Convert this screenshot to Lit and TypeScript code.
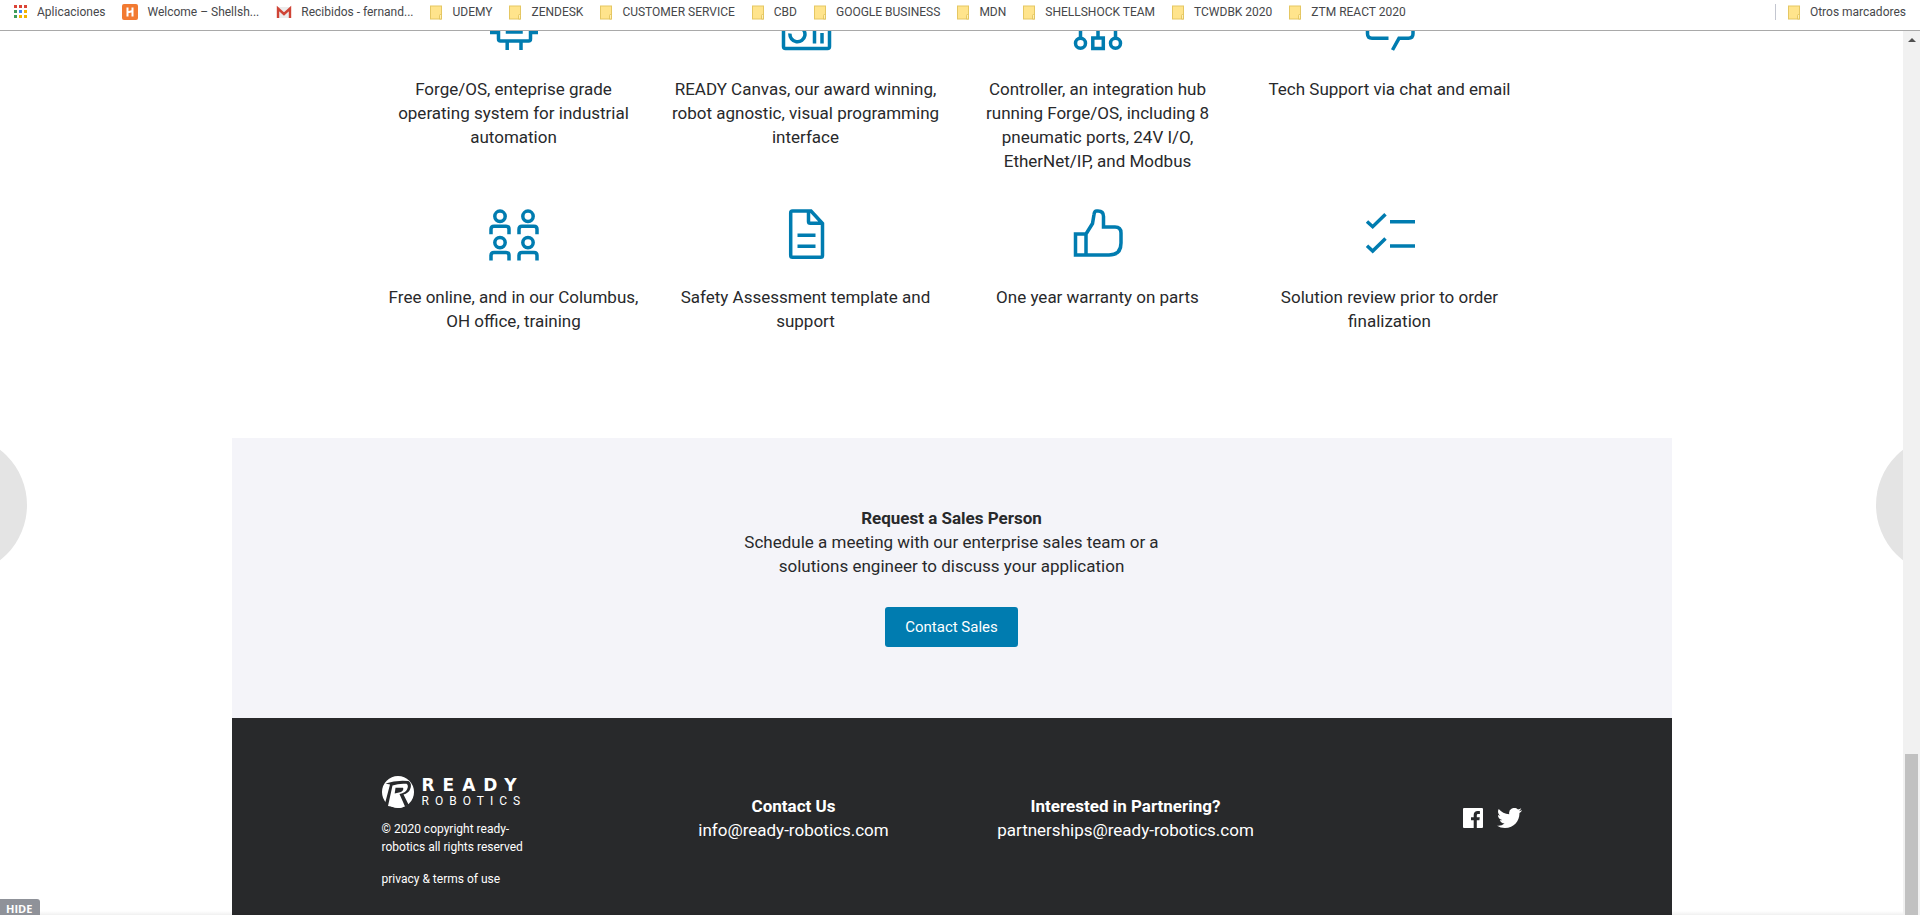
import { LitElement, html, svg, css } from "lit";
import { customElement } from "lit/decorators.js";

const folder = html`<svg class="folder" viewBox="0 0 12 15" aria-hidden="true">
  <rect x="0.5" y="1" width="11" height="13" fill="#ffe48c" stroke="#e5c763" />
  <path d="M9.5 14V10.500q0-1 1-1t1 1V14z" fill="#fff0b5" stroke="#e0bf55" stroke-width="0.8" />
</svg>`;

const appsIcon = html`<svg class="apps" viewBox="0 0 14 14" aria-hidden="true">
  ${["#db4437", "#db4437", "#db4437", "#3f9d5a", "#4285f4", "#f4b400", "#3f9d5a", "#f4b400", "#f4b400"].map(
    (c, i) => svg`<rect x=${(i % 3) * 5} y=${Math.floor(i / 3) * 5} width="3" height="3" fill=${c} />`
  )}
</svg>`;

const shellIcon = html`<svg class="fav" viewBox="0 0 16 16" aria-hidden="true">
  <rect width="16" height="16" rx="2" fill="#f27a31" />
  <path d="M5.500 3.500v9M10.500 3.500v9M5.500 8.500l5-1.500" stroke="#fff" stroke-width="2" fill="none" />
</svg>`;

const mailIcon = html`<svg class="fav" viewBox="0 0 16 16" aria-hidden="true">
  <rect x="1" y="3" width="14" height="11" fill="#ececec" />
  <path d="M2 14V4.500L8 10l6-5.500V14" fill="none" stroke="#cf4436" stroke-width="2.400" />
</svg>`;

const bookmarks = [
  { icon: appsIcon, label: "Aplicaciones" },
  { icon: shellIcon, label: "Welcome – Shellsh..." },
  { icon: mailIcon, label: "Recibidos - fernand..." },
  ...["UDEMY", "ZENDESK", "CUSTOMER SERVICE", "CBD", "GOOGLE BUSINESS", "MDN", "SHELLSHOCK TEAM", "TCWDBK 2020", "ZTM REACT 2020"].map(
    (label) => ({ icon: folder, label })
  ),
];

const person = (x: number, y: number) => svg`
  <circle cx=${x} cy=${y} r="5.200" />
  <path d="M${x - 9} ${y + 18}v-5q0-3 3-3h12q3 0 3 3v5" />`;

const features = [
  {
    text: "Forge/OS, enteprise grade operating system for industrial automation",
    art: svg`<rect x="14.500" y="13.500" width="32" height="31.500" rx="2" /><rect x="23.500" y="22.500" width="13.500" height="13.500" />
      <path d="M23.200 45v9M37 45v9M23.200 13V4M37 13V4M14 36.500H6M54 36.500h-7M14 22H6M54 22h-7" />`,
  },
  {
    text: "READY Canvas, our award winning, robot agnostic, visual programming interface",
    art: svg`<rect x="7.500" y="7" width="46" height="45.500" rx="2" />
      <path d="M14 37.500a7.500 7.500 0 1 0 9-6.500M38.500 28v19.500M46 37v10.500" />`,
  },
  {
    text: "Controller, an integration hub running Forge/OS, including 8 pneumatic ports, 24V I/O, EtherNet/IP, and Modbus",
    art: svg`<circle cx="12.500" cy="47.300" r="5" /><circle cx="47.500" cy="47.300" r="5" />
      <rect x="24.800" y="42" width="10.500" height="10.500" /><path d="M12.500 42V28h35v14M30 42V14" />`,
  },
  {
    text: "Tech Support via chat and email",
    art: svg`<path d="M28.500 42.300H12q-4.500 0-4.500-4.500V14q0-4.500 4.500-4.500h36.500q4.500 0 4.500 4.500v23.800q0 4.500-4.500 4.500H39L32.500 54" />`,
  },
  {
    text: "Free online, and in our Columbus, OH office, training",
    art: svg`${person(16, 12.3)}${person(44, 12.3)}${person(16, 38.6)}${person(44, 38.6)}`,
  },
  {
    text: "Safety Assessment template and support",
    art: svg`<path d="M16.500 7h18.500L46.500 19.500v32q0 1.800-1.800 1.800H16.500q-1.800 0-1.800-1.800v-42.500q0-2 1.800-2zM32.500 7v10.500q0 1.800 1.800 1.800h12M21.500 31.300h18M21.500 42.200h18" />`,
  },
  {
    text: "One year warranty on parts",
    art: svg`<path d="M7.500 30H18v21H7.500zM18 30l6.500-10.500 1.500-9Q26.500 7 28.500 7H30q5.500 0 5.500 5.500V23H47q6 0 6 6v10q0 12-12 12H18" />`,
  },
  {
    text: "Solution review prior to order finalization",
    art: svg`<path d="M7 17.500l5.700 5.200L25.500 10.300M7 41.800l5.700 5.200L25.500 34.600M30 17.700h25M30 42h25" />`,
  },
];

@customElement("app-root")
export class AppRoot extends LitElement {
  static styles = css`
    :host {
      display: flex;
      flex-direction: column;
      height: 100vh;
      overflow: hidden;
      background: #fff;
      color: #28292b;
      font: 17px/24px Roboto, sans-serif;
    }
    * {
      box-sizing: border-box;
    }
    p,
    h2 {
      margin: 0;
      font-size: inherit;
    }
    a {
      color: inherit;
      text-decoration: none;
    }
    svg {
      display: block;
      flex: none;
    }
    .bookmarks {
      display: flex;
      align-items: center;
      gap: 17px;
      flex: none;
      padding: 0 14px 6px;
      border-bottom: 1px solid #a9a9a9;
      color: #46474a;
      font: 12px/24px Roboto, sans-serif;
      white-space: nowrap;
    }
    .bookmark {
      display: flex;
      align-items: center;
      gap: 9px;
    }
    .others {
      margin-left: auto;
      padding-left: 12px;
      border-left: 1px solid #c3c6d0;
      line-height: 16px;
    }
    .folder {
      width: 12px;
      height: 15px;
      margin-right: 1px;
    }
    .apps {
      width: 14px;
      height: 14px;
    }
    .fav {
      width: 16px;
      height: 16px;
    }
    .window {
      position: relative;
      display: flex;
      flex: 1;
      min-height: 0;
    }
    .view {
      position: relative;
      display: flex;
      flex: 1;
      flex-direction: column;
      justify-content: flex-end;
      align-items: center;
      overflow: hidden;
    }
    .page {
      flex: none;
      width: 100%;
      max-width: 1440px;
    }
    .features {
      display: grid;
      grid-template-columns: repeat(4, 1fr);
      row-gap: 31px;
      max-width: 1168px;
      margin: 0 auto;
      padding-bottom: 105px;
      text-align: center;
    }
    .feature {
      display: flex;
      flex-direction: column;
      align-items: center;
      gap: 21px;
      padding: 0 11px;
    }
    .art {
      width: 60px;
      height: 60px;
      fill: none;
      stroke: #007cb0;
      stroke-width: 3.5;
    }
    .sales {
      display: flex;
      flex-direction: column;
      align-items: center;
      padding: 68px 24px 71px;
      background: #f4f4f9;
      text-align: center;
    }
    .pitch {
      max-width: 440px;
    }
    .cta {
      height: 40px;
      margin-top: 29px;
      padding: 0 20px;
      border: 0;
      border-radius: 3px;
      background: #007cb0;
      color: #fff;
      font: 15px/24px Roboto, sans-serif;
    }
    .footer {
      display: grid;
      grid-template-columns: 246fr 332fr 332fr 230fr;
      padding: 58px 150px 27px;
      background: #28292b;
      color: #fff;
    }
    .legal {
      max-width: 155px;
      font-size: 12px;
      line-height: 18px;
    }
    .brand {
      display: flex;
      gap: 8px;
      height: 32px;
      margin-bottom: 12px;
    }
    .mark {
      width: 32px;
      height: 32px;
    }
    .word {
      display: flex;
      flex-direction: column;
      justify-content: center;
    }
    .ready {
      font: bold 17px/18px "DejaVu Sans", sans-serif;
      letter-spacing: 8px;
    }
    .robotics {
      font: 12px/14px Roboto, sans-serif;
      letter-spacing: 6px;
    }
    .terms {
      display: block;
      margin-top: 14px;
    }
    .contact {
      padding-top: 18px;
      text-align: center;
    }
    .social {
      display: flex;
      justify-content: flex-end;
      gap: 14px;
      padding-top: 32px;
    }
    .facebook {
      width: 20px;
      height: 20px;
    }
    .twitter {
      width: 25px;
      height: 20px;
    }
    .nav {
      position: absolute;
      top: 404px;
      width: 140px;
      height: 140px;
      padding: 0;
      border: 0;
      border-radius: 50%;
      background: #e4e4e4;
    }
    .prev {
      left: -113px;
    }
    .next {
      right: -113px;
    }
    .hide {
      position: absolute;
      bottom: 0;
      left: 0;
      width: 40px;
      height: 16px;
      padding: 0 0 0 6px;
      border: 0;
      border-radius: 0 3px 0 0;
      background: #8f9299;
      color: #fff;
      font: bold 11px/20px "Open Sans", sans-serif;
      text-align: left;
    }
    .shade {
      position: absolute;
      right: 0;
      bottom: 0;
      left: 0;
      height: 4px;
      background: linear-gradient(transparent, rgba(0, 0, 0, 0.06));
    }
    .track {
      display: flex;
      flex: none;
      flex-direction: column;
      justify-content: space-between;
      align-items: center;
      width: 17px;
      padding-top: 7px;
      background: #f1f1f1;
    }
    .arrow {
      width: 8px;
      height: 4px;
    }
    .thumb {
      width: 13px;
      height: 161px;
      background: #c1c1c1;
    }
  `;

  render() {
    return html`
      <nav class="bookmarks">
        ${bookmarks.map((b) => html`<a class="bookmark" href="#">${b.icon}<span>${b.label}</span></a>`)}
        <a class="bookmark others" href="#">${folder}<span>Otros marcadores</span></a>
      </nav>
      <div class="window">
        <main class="view">
          <div class="page">
            <section class="features">
              ${features.map(
                (f) => html`<div class="feature">
                  <svg class="art" viewBox="0 0 60 60" aria-hidden="true">${f.art}</svg>
                  <p>${f.text}</p>
                </div>`
              )}
            </section>
            <section class="sales">
              <h2>Request a Sales Person</h2>
              <p class="pitch">Schedule a meeting with our enterprise sales team or a solutions engineer to discuss your application</p>
              <button class="cta">Contact Sales</button>
            </section>
            <footer class="footer">
              <div class="legal">
                <div class="brand">
                  <svg class="mark" viewBox="0 0 32 32" aria-hidden="true">
                    <circle cx="16" cy="16" r="16" fill="#fff" />
                    <path d="M3.500 7.500Q14 3.800 26.500 5Q30.500 7.500 28 13.500Q26.500 17 21.500 18.500L26.500 28.500L22 31.500L16 20L8 31.500L3 27.500L8 8.500z" fill="#28292b" />
                    <path d="M10.500 9.500Q17 7.200 24.500 7.800Q27 9.500 25 13.500Q23.500 16.500 17.500 18L23 30.500L17.500 32L6 30z" fill="#fff" />
                    <path d="M13.500 11.800h7.500q1.200 2.200-2 4.200l-6.300 1.500z" fill="#28292b" />
                  </svg>
                  <div class="word"><span class="ready">READY</span><span class="robotics">ROBOTICS</span></div>
                </div>
                <p>© 2020 copyright ready-robotics all rights reserved</p>
                <a class="terms" href="#">privacy &amp; terms of use</a>
              </div>
              <div class="contact">
                <h2>Contact Us</h2>
                <a href="mailto:info@ready-robotics.com">info@ready-robotics.com</a>
              </div>
              <div class="contact">
                <h2>Interested in Partnering?</h2>
                <a href="mailto:partnerships@ready-robotics.com">partnerships@ready-robotics.com</a>
              </div>
              <div class="social">
                <a href="#" aria-label="Facebook">
                  <svg class="facebook" viewBox="0 0 20 20">
                    <path fill="#fff" d="M1 0h18q1 0 1 1v18q0 1-1 1h-5.200v-7.700h2.600l.4-3h-3V7.400c0-.9.200-1.500 1.500-1.500h1.600V3.200c-.3 0-1.200-.1-2.300-.1-2.300 0-3.900 1.400-3.900 4v2.200H8v3h2.700V20H1q-1 0-1-1V1q0-1 1-1z" />
                  </svg>
                </a>
                <a href="#" aria-label="Twitter">
                  <svg class="twitter" viewBox="0 0 24 19.500" preserveAspectRatio="none">
                    <path fill="#fff" d="M23.950 2.300a10 10 0 0 1-2.820.78 4.960 4.960 0 0 0 2.160-2.720c-.95.560-2 .960-3.130 1.190a4.920 4.920 0 0 0-8.380 4.480C7.690 5.820 4.070 3.860 1.640.880a4.820 4.820 0 0 0-.660 2.480c0 1.710.870 3.210 2.190 4.090a4.900 4.900 0 0 1-2.230-.610v.060a4.920 4.920 0 0 0 3.950 4.830 5 5 0 0 1-2.210.080 4.940 4.940 0 0 0 4.600 3.420A9.870 9.870 0 0 1 0 17.270a14 14 0 0 0 7.550 2.210c9.050 0 14-7.500 14-13.980 0-.210 0-.420-.020-.630a9.940 9.940 0 0 0 2.460-2.550z" />
                  </svg>
                </a>
              </div>
            </footer>
          </div>
          <button class="nav prev" aria-label="Anterior"></button>
          <button class="nav next" aria-label="Siguiente"></button>
          <div class="shade"></div>
          <button class="hide">HIDE</button>
        </main>
        <div class="track" aria-hidden="true">
          <svg class="arrow" viewBox="0 0 8 4"><path d="M0 4L4 0l4 4z" fill="#505050" /></svg>
          <div class="thumb"></div>
        </div>
      </div>
    `;
  }
}
